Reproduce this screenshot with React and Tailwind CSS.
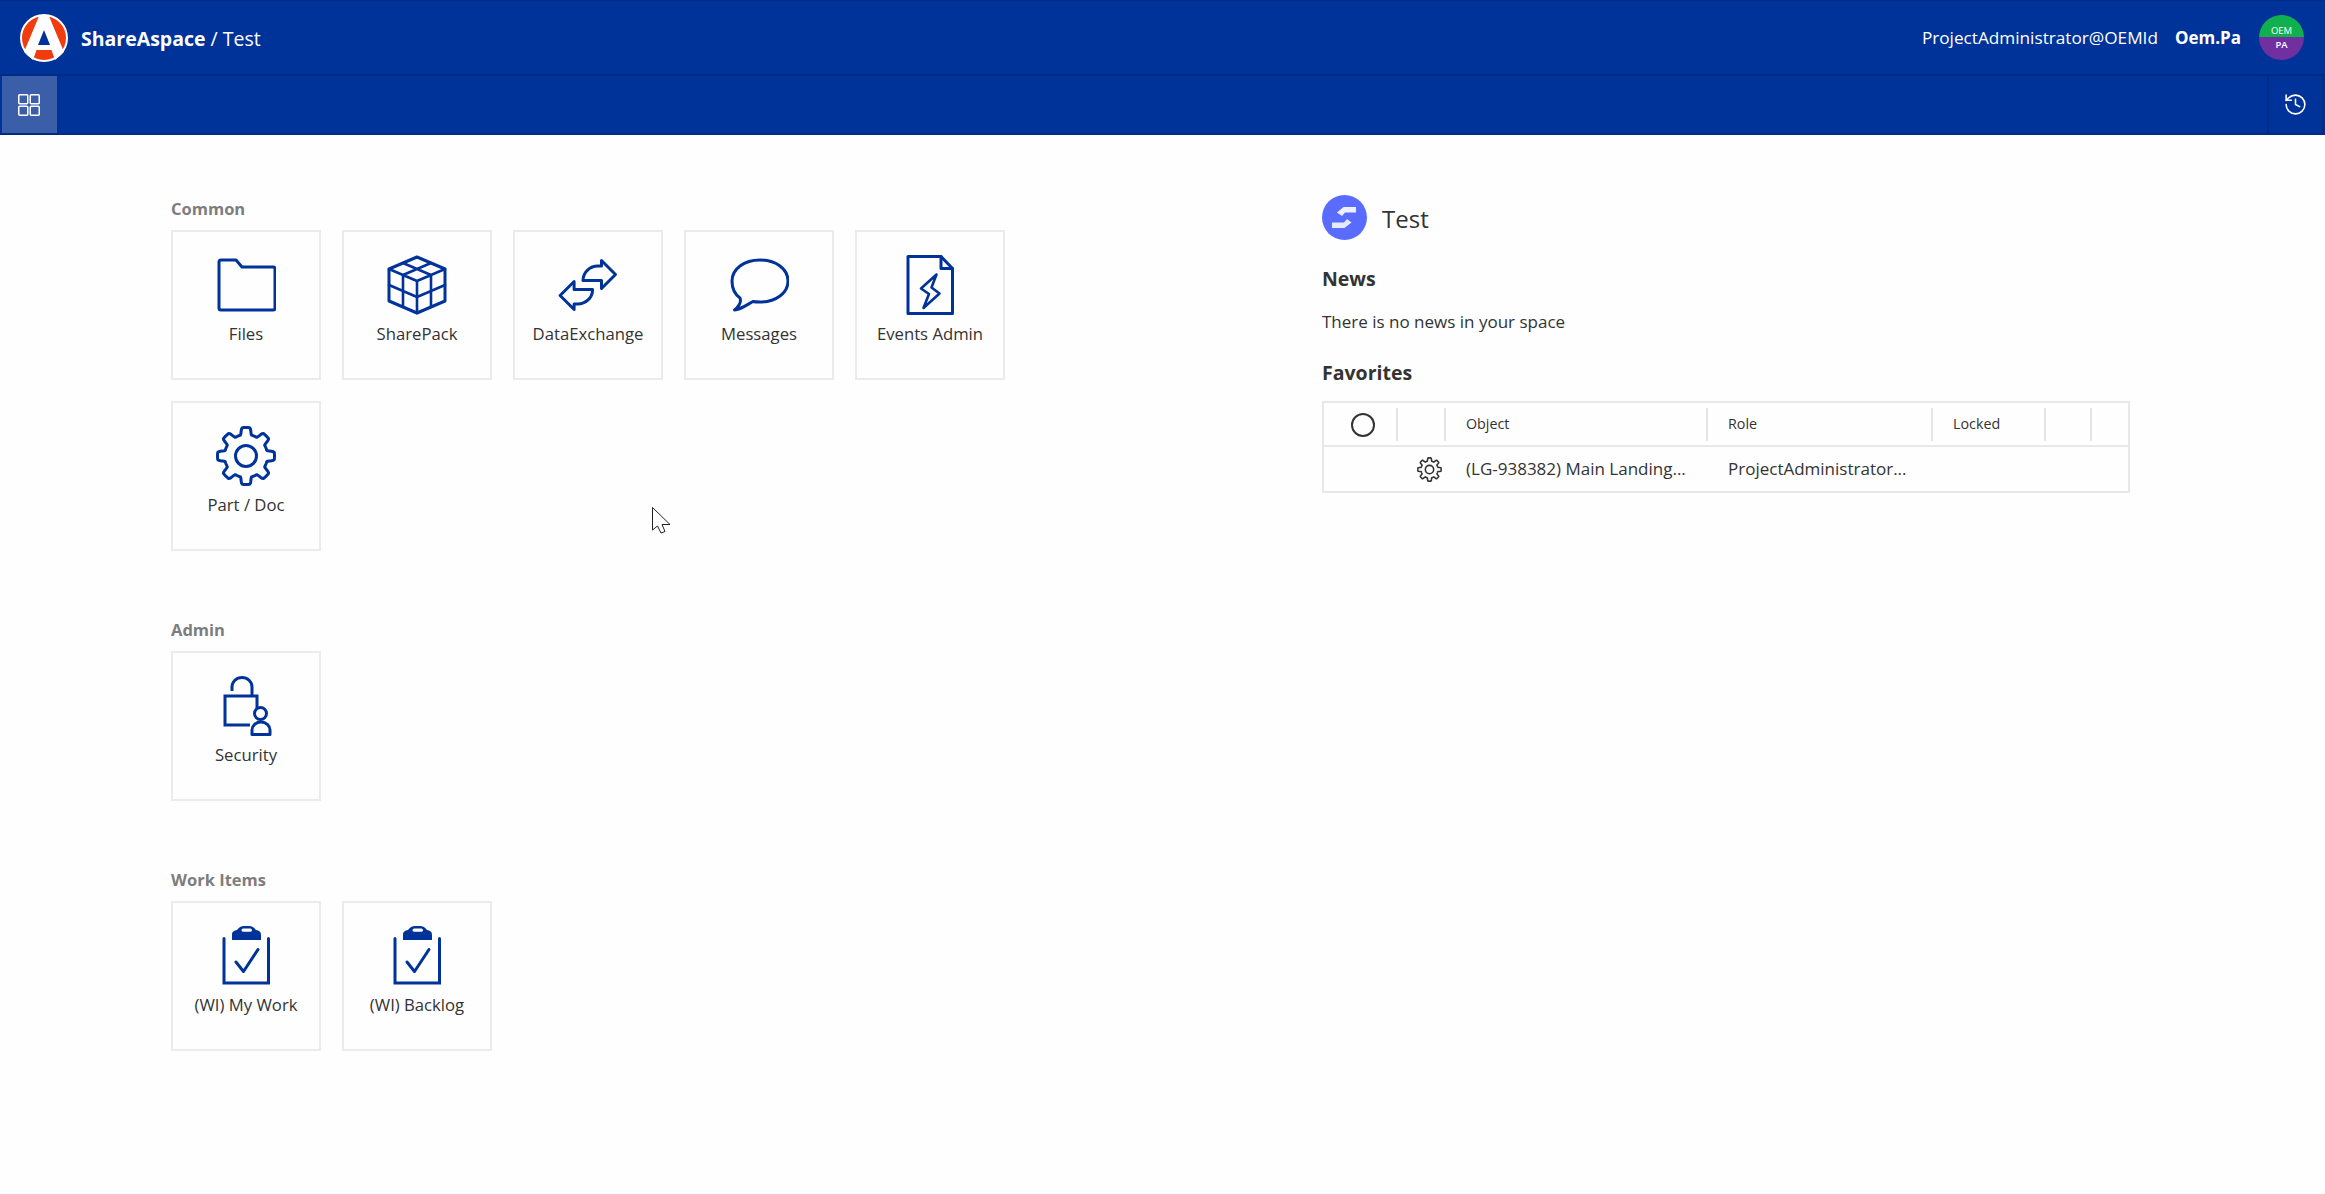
import React from 'react'
import { History } from 'lucide-react'

const BLUE = '#003399'

// rounded cog outline, sampled around the circle
const gearPath = (cx, cy, rOut, rIn, teeth = 8) => {
  const pts = []
  for (let i = 0; i < 240; i++) {
    const a = (i / 240) * Math.PI * 2
    const w = Math.cos(a * teeth)
    const t = Math.min(1, Math.max(0, (w + 0.55) / 1.1))
    const s = t * t * (3 - 2 * t)
    const r = rIn + (rOut - rIn) * s
    pts.push((cx + Math.sin(a) * r).toFixed(2) + ' ' + (cy - Math.cos(a) * r).toFixed(2))
  }
  return 'M' + pts.join('L') + 'Z'
}

const Icon = ({ children }) => (
  <svg width="60" height="60" viewBox="0 0 60 60" fill="none" stroke={BLUE} strokeWidth="3" strokeLinejoin="round" strokeLinecap="round">
    {children}
  </svg>
)

const IconFolder = () => (
  <Icon>
    <path d="M5 5H20L26 12H57a2 2 0 0 1 2 2V53a2 2 0 0 1-2 2H5a2 2 0 0 1-2-2V7a2 2 0 0 1 2-2Z" />
  </Icon>
)

const IconCube = () => (
  <Icon>
    <path d="M30 2L58 14V46L30 58L2 46V14Z" />
    <path d="M2 14L30 26L58 14M30 26V58M2 30L30 42L58 30M16 8L44 20M44 8L16 20M16 20V52M44 20V52" strokeWidth="2.6" />
  </Icon>
)

const IconExchange = () => (
  <Icon>
    <path d="M43.5 5.5L57.5 19.5L43.5 33.5V25.5H25C25 17 32 11 40 11H43.5Z" />
    <path d="M43.5 5.5L57.5 19.5L43.5 33.5V25.5H25C25 17 32 11 40 11H43.5Z" transform="rotate(180 29.8 30)" />
  </Icon>
)

const IconBubble = () => (
  <Icon>
    <path d="M11 43C5.5 39 3 33 3 26C3 14 15 5 31 5C47 5 59 14 59 26C59 38 47 47 31 47C28 47 26 47 24 46.5C19 49 12 54.5 5.5 55C9 52 13 48 11 43Z" />
  </Icon>
)

const IconEvents = () => (
  <Icon>
    <path d="M8 1.5H41L52.5 13.5V58.5H8Z" />
    <path d="M41 1.5V13.5H52.5" />
    <path d="M36.5 19.5L21 33.5L29 39L23.5 53L39.5 38.5L31.5 32.5Z" strokeWidth="2.6" />
  </Icon>
)

const IconGear = () => (
  <Icon>
    <path d={gearPath(30, 30, 28.5, 21.5)} />
    <circle cx="30" cy="30" r="10.5" />
  </Icon>
)

const IconSecurity = () => (
  <Icon>
    <path d="M41 32V20H9V49H34" strokeLinecap="butt" strokeLinejoin="miter" />
    <path d="M16 15V11a10 9.5 0 0 1 20 0V19" strokeLinecap="butt" />
    <circle cx="44.5" cy="37.5" r="6" />
    <path d="M36 58.5V54a9 8 0 0 1 18 0V58.5Z" />
  </Icon>
)

const IconClipboard = () => (
  <Icon>
    <path d="M8 12.5V57H52.5V12.5" strokeLinejoin="miter" />
    <path d="M20 36L27.5 45.5L42 23.5" strokeWidth="3" />
    <path fillRule="evenodd" stroke="none" fill={BLUE} d="M16 14V9C16 5.5 18 4.5 21 4C23 1.5 25 0 28 0H33C36 0 38 1.5 40 4C43 4.5 45 5.5 45 9V14ZM28 2.5C26.5 2.5 25.5 3.2 25.5 4.2C25.5 5.2 26.5 5.8 28 5.8H33.5C35 5.8 36 5.2 36 4.2C36 3.2 35 2.5 33.5 2.5Z" />
  </Icon>
)

const Logo = () => (
  <svg width="48" height="48" viewBox="0 0 48 48" className="shrink-0">
    <circle cx="24" cy="24" r="24" fill="#fff" />
    <circle cx="24" cy="24" r="22" fill="#f03c0e" />
    <path d="M19.5 1H28.5L44 38L35 46L31.5 36H16.5L13 46L4 38Z" fill="#fff" />
    <path d="M24 16L18 31H30Z" fill={BLUE} />
  </svg>
)

const SpaceLogo = () => (
  <svg width="45" height="45" viewBox="0 0 45 45" className="shrink-0">
    <circle cx="22.5" cy="22.5" r="22.5" fill="#5a6bff" />
    <path d="M15 17.5L21.5 12H34V17.5H23L20 21Z" fill="#eef0fb" />
    <path d="M10 27.5H22L25 24L29.5 27.5L22.5 33H10Z" fill="#e6eaf8" />
  </svg>
)

const Tile = ({ icon, label }) => (
  <div className="w-[150px] h-[150px] border-2 border-[#ebebeb] bg-[#fefefe] flex flex-col items-center pt-[23px]">
    {icon}
    <span className="mt-[5px] text-[16.7px] leading-[28px] text-[#333] whitespace-nowrap">{label}</span>
  </div>
)

const Section = ({ title, className = '', children }) => (
  <section className={className}>
    <h2 className="text-[16.5px] leading-[21px] font-bold text-[#7d7d7d] mb-[11px]">{title}</h2>
    <div className="grid grid-cols-[repeat(5,150px)] gap-[21px]">{children}</div>
  </section>
)

const HeadCell = ({ children, className = '' }) => (
  <div className={'h-[33px] self-center border-l-2 border-[#e5e5e5] pl-[20px] flex items-center text-[14.3px] text-[#333] ' + className}>{children}</div>
)

export default function App() {
  return (
    <div className="relative min-h-[1194px] bg-[#fefefe] font-['Open_Sans','Noto_Sans',sans-serif] overflow-hidden">
      <header className="h-[76px] bg-[#003399] border-t border-[#002b85] border-b-2 border-b-[#002b85] flex items-center pl-[20px] pr-[21px] text-white">
        <Logo />
        <div className="ml-[13px] mt-[3px] text-[19.5px] leading-none">
          <span className="font-bold">ShareAspace</span> / Test
        </div>
        <div className="ml-auto flex items-center">
          <span className="text-[17.2px]">ProjectAdministrator@OEMId</span>
          <span className="ml-[17px] text-[17px] font-bold">Oem.Pa</span>
          <div className="ml-[18px] w-[45px] h-[45px] rounded-full overflow-hidden flex flex-col text-[9.5px] leading-none text-center">
            <div className="flex-1 bg-[#10b04f] flex items-end justify-center pb-[2px]">OEM</div>
            <div className="flex-1 bg-[#7030a0] pt-[3px] font-semibold">PA</div>
          </div>
        </div>
      </header>

      <nav className="h-[59px] bg-[#003399] border-b-2 border-[#002b85] flex justify-between text-white">
        <div className="ml-[2px] w-[55px] bg-[#3a5fa8] flex items-center justify-center pr-[2px]">
          <svg width="24" height="24" viewBox="0 0 24 24" fill="none" stroke="#fff" strokeWidth="1.5">
            <rect x="1.75" y="1.75" width="9" height="9" rx="1" />
            <rect x="13.25" y="1.75" width="9" height="9" rx="1" />
            <rect x="1.75" y="13.25" width="9" height="9" rx="1" />
            <rect x="13.25" y="13.25" width="9" height="9" rx="1" />
          </svg>
        </div>
        <div className="w-[57px] mr-[1px] border-x-2 border-[#002b85] flex items-center justify-center">
          <History size={25} strokeWidth={1.5} />
        </div>
      </nav>

      <main className="flex">
        <div className="w-[1322px] pl-[171px] pt-[63px]">
          <Section title="Common">
            <Tile icon={<IconFolder />} label="Files" />
            <Tile icon={<IconCube />} label="SharePack" />
            <Tile icon={<IconExchange />} label="DataExchange" />
            <Tile icon={<IconBubble />} label="Messages" />
            <Tile icon={<IconEvents />} label="Events Admin" />
            <Tile icon={<IconGear />} label="Part / Doc" />
          </Section>
          <Section title="Admin" className="mt-[68px]">
            <Tile icon={<IconSecurity />} label="Security" />
          </Section>
          <Section title="Work Items" className="mt-[68px]">
            <Tile icon={<IconClipboard />} label="(WI) My Work" />
            <Tile icon={<IconClipboard />} label="(WI) Backlog" />
          </Section>
        </div>

        <div className="w-[808px] pt-[60px] text-[#333]">
          <div className="flex items-center gap-[15px] h-[45px]">
            <SpaceLogo />
            <h1 className="text-[24px] font-normal mt-[2px]">Test</h1>
          </div>
          <h3 className="mt-[26px] text-[19.5px] leading-[26px] font-bold">News</h3>
          <p className="mt-[17px] text-[17px] leading-[26px]">There is no news in your space</p>
          <h3 className="mt-[25px] text-[19.5px] leading-[26px] font-bold">Favorites</h3>
          <div className="mt-[15px] border-2 border-[#e8e8e8]">
            <div className="grid grid-cols-[72px_48px_262px_225px_113px_46px_1fr] h-[44px] border-b-2 border-[#e8e8e8]">
              <div className="flex items-center justify-center pl-[5px] pt-[1px]">
                <span className="w-[24px] h-[24px] rounded-full border-2 border-[#333]" />
              </div>
              <HeadCell />
              <HeadCell>Object</HeadCell>
              <HeadCell>Role</HeadCell>
              <HeadCell>Locked</HeadCell>
              <HeadCell />
              <HeadCell />
            </div>
            <div className="grid grid-cols-[72px_48px_262px_225px_1fr] h-[44px] items-center text-[17px]">
              <div />
              <div className="flex justify-center pl-[19px]">
                <svg width="25" height="25" viewBox="0 0 60 60" fill="none" stroke="#333" strokeWidth="3.8" strokeLinejoin="round">
                  <path d={gearPath(30, 30, 28, 20.5)} />
                  <circle cx="30" cy="30" r="10" />
                </svg>
              </div>
              <div className="pl-[22px] whitespace-nowrap">(LG-938382) Main Landing...</div>
              <div className="pl-[22px] whitespace-nowrap">ProjectAdministrator...</div>
              <div />
            </div>
          </div>
        </div>
      </main>

      {/* mouse pointer caught in the shot */}
      <svg className="absolute left-[652px] top-[507px]" width="19" height="28" viewBox="0 0 19 28" fill="#fff" stroke="#222" strokeWidth="1">
        <path d="M.5.5V23L5.5 19L9 26L13 24.5L10 17.5H18Z" />
      </svg>
    </div>
  )
}
